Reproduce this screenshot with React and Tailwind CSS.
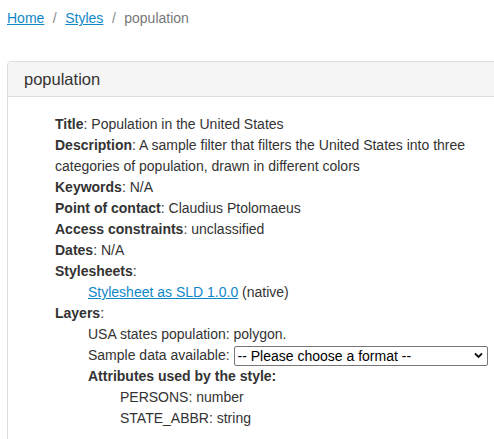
function Field({ label, children }) {
  return (
    <li>
      <strong className="font-bold">{label}</strong>: {children}
    </li>
  )
}

function App() {
  return (
    <div className="min-h-[439px] w-full overflow-hidden bg-white text-[14px] leading-[21px] text-[#333]" style={{ fontFamily: '"Liberation Sans", Arial, sans-serif' }}>
      <div className="px-[7px] pt-[8px] pb-[8px] leading-[20px] text-[#777]">
        <a href="#" className="text-[#1088c8] underline">Home</a>
        <span className="px-[8.5px] text-[#8a8a8a]">/</span>
        <a href="#" className="text-[#1088c8] underline">Styles</a>
        <span className="px-[8.5px] text-[#8a8a8a]">/</span>
        <span>population</span>
      </div>

      <div className="ml-[7px] mr-[-12px] mt-[25px] rounded-[4px] border border-[#ddd] bg-white">
        <div className="rounded-t-[4px] border-b border-[#ddd] bg-[#f5f5f5] px-[16px] py-[8px] text-[16.5px] leading-[18px] text-[#333]">
          population
        </div>
        <div className="pb-[15px] pl-[47px] pr-[10px] pt-[17px]">
          <ul>
            <Field label="Title">Population in the United States</Field>
            <Field label="Description">
              A sample filter that filters the United States into three categories of population, drawn in different colors
            </Field>
            <Field label="Keywords">N/A</Field>
            <Field label="Point of contact">Claudius Ptolomaeus</Field>
            <Field label="Access constraints">unclassified</Field>
            <Field label="Dates">N/A</Field>
            <li>
              <strong className="font-bold">Stylesheets</strong>:
              <ul className="pl-[33px]">
                <li>
                  <a href="#" className="text-[#1088c8] underline">Stylesheet as SLD 1.0.0</a> (native)
                </li>
              </ul>
            </li>
            <li>
              <strong className="font-bold">Layers</strong>:
              <ul className="pl-[33px]">
                <li>USA states population: polygon.</li>
                <li className="flex items-center whitespace-nowrap">
                  <span className="shrink-0">Sample data available:&nbsp;</span>
                  <span className="relative inline-block shrink-0">
                    <select className="block h-[20px] w-[254px] appearance-none rounded-[2px] border border-[#767676] bg-white pl-[3px] text-[14px] leading-[18px] text-black">
                      <option>-- Please choose a format --</option>
                    </select>
                    <svg className="pointer-events-none absolute right-[5px] top-[6px]" width="9" height="7" viewBox="0 0 9 7">
                      <path d="M1 1.5 L4.5 5 L8 1.5" fill="none" stroke="#111" strokeWidth="1.8" />
                    </svg>
                  </span>
                </li>
                <li>
                  <strong className="font-bold">Attributes used by the style:</strong>
                  <ul className="pl-[32px]">
                    <li>PERSONS: number</li>
                    <li>STATE_ABBR: string</li>
                  </ul>
                </li>
              </ul>
            </li>
          </ul>
        </div>
      </div>
    </div>
  )
}

export default App
